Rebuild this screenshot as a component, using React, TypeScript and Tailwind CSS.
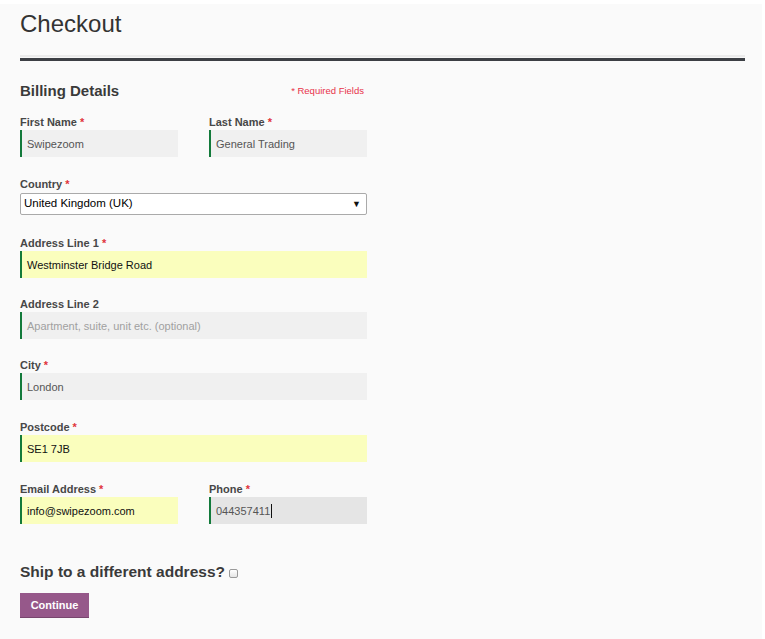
import React from "react";

const FONT = { fontFamily: '"Liberation Sans", Arial, Helvetica, sans-serif' };

type Variant = "gray" | "yellow" | "focus";

function Label({ text, required }: { text: string; required?: boolean }) {
  return (
    <div className="h-[15px] text-[11px] leading-[15px] font-bold text-[#474747] whitespace-nowrap">
      {text}
      {required && <span className="text-[#e0343a]"> *</span>}
    </div>
  );
}

function Input({
  value,
  placeholder,
  variant,
  caret,
}: {
  value?: string;
  placeholder?: string;
  variant: Variant;
  caret?: boolean;
}) {
  const bg =
    variant === "yellow"
      ? "bg-[#fafebd] text-[#111]"
      : variant === "focus"
      ? "bg-[#e5e5e5] text-[#555]"
      : "bg-[#f0f0f0] text-[#555]";
  return (
    <div
      className={`h-[27px] flex items-center border-l-2 border-[#137a3b] pl-[5px] pt-[1px] text-[11px] leading-none whitespace-nowrap ${bg}`}
    >
      {value ? (
        <span>{value}</span>
      ) : (
        <span className="text-[#a0a0a0]">{placeholder}</span>
      )}
      {caret && <span className="ml-[1px] inline-block w-[1px] h-[14px] bg-[#111]" />}
    </div>
  );
}

export default function App() {
  return (
    <div className="min-h-screen bg-white pt-[4px]" style={FONT}>
      <div className="w-[762px] min-h-[635px] bg-[#fafafa] pl-5 pr-[17px] pt-[6px]">
        <h1 className="text-[24px] leading-[28px] font-normal text-[#333] mb-[17px]">Checkout</h1>
        <div className="h-[2px] bg-[#ebebeb]" />
        <div className="h-[1px] bg-[#f7f7f7]" />
        <div className="h-[3px] bg-[#3c3f44]" />

        <div className="w-[347px]">
          <div className="mt-[20px] h-[20px] flex items-center justify-between pr-[3px]">
            <h2 className="text-[15px] leading-[20px] font-bold text-[#3a3a3a]">Billing Details</h2>
            <span className="text-[9.5px] text-[#e8334a]">* Required Fields</span>
          </div>

          <div className="mt-[14px] flex gap-[31px] mb-[20px]">
            <div className="w-[158px]">
              <Label text="First Name" required />
              <Input value="Swipezoom" variant="gray" />
            </div>
            <div className="w-[158px]">
              <Label text="Last Name" required />
              <Input value="General Trading" variant="gray" />
            </div>
          </div>

          <div className="mb-[21px]">
            <Label text="Country" required />
            <div className="mt-[1px] h-[22px] flex items-center justify-between bg-white border border-[#aaaaaa] rounded-[2px] pl-[3px] pr-[5px] text-[11.5px] text-black">
              <span>United Kingdom (UK)</span>
              <span className="text-[9px] leading-none text-[#111]">▼</span>
            </div>
          </div>

          <div className="mb-[19px]">
            <Label text="Address Line 1" required />
            <Input value="Westminster Bridge Road" variant="yellow" />
          </div>

          <div className="mb-[19px]">
            <Label text="Address Line 2" />
            <Input placeholder="Apartment, suite, unit etc. (optional)" variant="gray" />
          </div>

          <div className="mb-[20px]">
            <Label text="City" required />
            <Input value="London" variant="gray" />
          </div>

          <div className="mb-[20px]">
            <Label text="Postcode" required />
            <Input value="SE1 7JB" variant="yellow" />
          </div>

          <div className="flex gap-[31px]">
            <div className="w-[158px]">
              <Label text="Email Address" required />
              <Input value="info@swipezoom.com" variant="yellow" />
            </div>
            <div className="w-[158px]">
              <Label text="Phone" required />
              <Input value="044357411" variant="focus" caret />
            </div>
          </div>

          <div className="mt-[38px] h-[20px] flex items-center">
            <h3 className="text-[15.5px] leading-[20px] font-bold text-[#3a3a3a] whitespace-nowrap">
              Ship to a different address?
            </h3>
            <span className="ml-[4px] mt-[2px] inline-block w-[9px] h-[9px] rounded-[2px] border border-[#9a9a9a] bg-gradient-to-b from-white to-[#e6e6e6]" />
          </div>

          <button className="mt-[11px] w-[69px] h-[25px] bg-[#96588a] text-white text-[11px] font-bold shadow-[inset_0_-1px_0_rgba(0,0,0,0.2)]">
            Continue
          </button>
        </div>
      </div>
    </div>
  );
}
